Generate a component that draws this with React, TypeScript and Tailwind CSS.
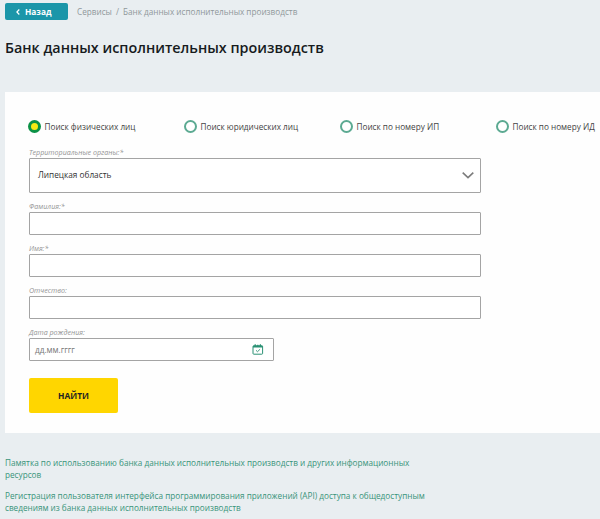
import React from "react";

type FieldProps = {
  label: string;
  children: React.ReactNode;
};

const searchTypes = [
  { label: "Поиск физических лиц", checked: true },
  { label: "Поиск юридических лиц", checked: false },
  { label: "Поиск по номеру ИП", checked: false },
  { label: "Поиск по номеру ИД", checked: false },
];

const Radio = ({ checked }: { checked: boolean }) => {
  if (checked) {
    return (
      <span className="flex h-[13px] w-[13px] shrink-0 items-center justify-center rounded-full bg-[#0b9146]">
        <span className="h-[7px] w-[7px] rounded-full bg-[#f5ea14]"></span>
      </span>
    );
  }
  return (
    <span className="h-[13px] w-[13px] shrink-0 rounded-full border-2 border-[#5caa92] bg-white"></span>
  );
};

const Field = ({ label, children }: FieldProps) => (
  <div>
    <div className="flex h-[19px] items-end pb-px text-[7.1px] leading-[10px] whitespace-nowrap text-[#959595] italic">
      {label}
    </div>
    {children}
  </div>
);

const CalendarIcon = () => (
  <svg width="12" height="11" viewBox="0 0 12 11" fill="none" stroke="#2b9174">
    <rect x="1" y="1.8" width="9.6" height="8.4" rx="0.8" />
    <path d="M1 2.6h9.6" strokeWidth="1.8" />
    <path d="M3.2 0.3v2.2M5.8 0.8v1.7M8.4 0.3v2.2" strokeWidth="1.2" />
    <path d="M4 6.3l1.5 1.4 2.6-2.5" strokeWidth="0.9" />
  </svg>
);

const App = () => {
  return (
    <div className="h-[519px] overflow-hidden bg-[#e9eef1] pt-[3px] pl-[5px] font-['Open_Sans','Noto_Sans',sans-serif]">
      <div className="flex h-[17px] items-center">
        <button className="flex h-[17px] w-[63px] items-center rounded-[2px] bg-[#1b96a9] pl-[11px] text-[8.3px] font-bold text-white">
          <svg width="4" height="6" viewBox="0 0 4 6" fill="none" stroke="currentColor" strokeWidth="1.2">
            <path d="M3.3 0.5L0.9 3l2.4 2.5" />
          </svg>
          <span className="ml-[5px] leading-[17px]">Назад</span>
        </button>
        <nav className="ml-[9px] flex gap-[4px] text-[8.2px] leading-[15px] whitespace-nowrap text-[#8f989b]">
          <span>Сервисы</span>
          <span>/</span>
          <span>Банк данных исполнительных производств</span>
        </nav>
      </div>
      <h1 className="mt-[18px] h-5 text-[14.35px] leading-5 font-semibold whitespace-nowrap text-[#171b1d]">
        Банк данных исполнительных производств
      </h1>

      <form className="mt-[34px] h-[341px] bg-[#fefefe] pt-[28px] pl-[24px]">
        <div className="-ml-px flex h-[13px] items-center">
          {searchTypes.map((type) => (
            <label key={type.label} className="flex w-[156px] shrink-0 items-center gap-[3.5px]">
              <Radio checked={type.checked} />
              <span className="text-[8.2px] leading-[13px] whitespace-nowrap text-[#444]">{type.label}</span>
            </label>
          ))}
        </div>

        <div className="mt-[6px] w-[452px]">
          <Field label="Территориальные органы:*">
            <div className="flex h-[35px] items-center justify-between rounded-[1px] border border-[#a4a4a4] bg-white pr-[6px] pl-[8px] text-[8.25px] text-[#333]">
              <span>Липецкая область</span>
              <svg width="12" height="7" viewBox="0 0 12 7" fill="none" stroke="#7c7c7c" strokeWidth="1.6">
                <path d="M0.7 0.7L6 5.6l5.3-4.9" />
              </svg>
            </div>
          </Field>
          <Field label="Фамилия:*">
            <div className="h-[23px] rounded-[1px] border border-[#a4a4a4] bg-white"></div>
          </Field>
          <Field label="Имя:*">
            <div className="h-[23px] rounded-[1px] border border-[#a4a4a4] bg-white"></div>
          </Field>
          <Field label="Отчество:">
            <div className="h-[23px] rounded-[1px] border border-[#a4a4a4] bg-white"></div>
          </Field>
          <Field label="Дата рождения:">
            <div className="flex h-[23px] w-[245px] items-center justify-between rounded-[1px] border border-[#a4a4a4] bg-white pr-[9px] pl-[5px] text-[8.2px] text-[#777]">
              <span className="pt-px">дд.мм.гггг</span>
              <CalendarIcon />
            </div>
          </Field>
        </div>

        <button className="mt-[17px] flex h-[35px] w-[89px] items-center justify-center rounded-[2px] bg-[#ffd600] text-[8.4px] font-bold text-[#222]">
          <span className="pt-px">НАЙТИ</span>
        </button>
      </form>

      <div className="mt-[24px] space-y-[9px] text-[8.2px] leading-[12px] whitespace-nowrap text-[#38947a]">
        <p>
          Памятка по использованию банка данных исполнительных производств и других информационных
          <br />
          ресурсов
        </p>
        <p>
          Регистрация пользователя интерфейса программирования приложений (API) доступа к общедоступным
          <br />
          сведениям из банка данных исполнительных производств
        </p>
      </div>
    </div>
  );
};

export default App;
